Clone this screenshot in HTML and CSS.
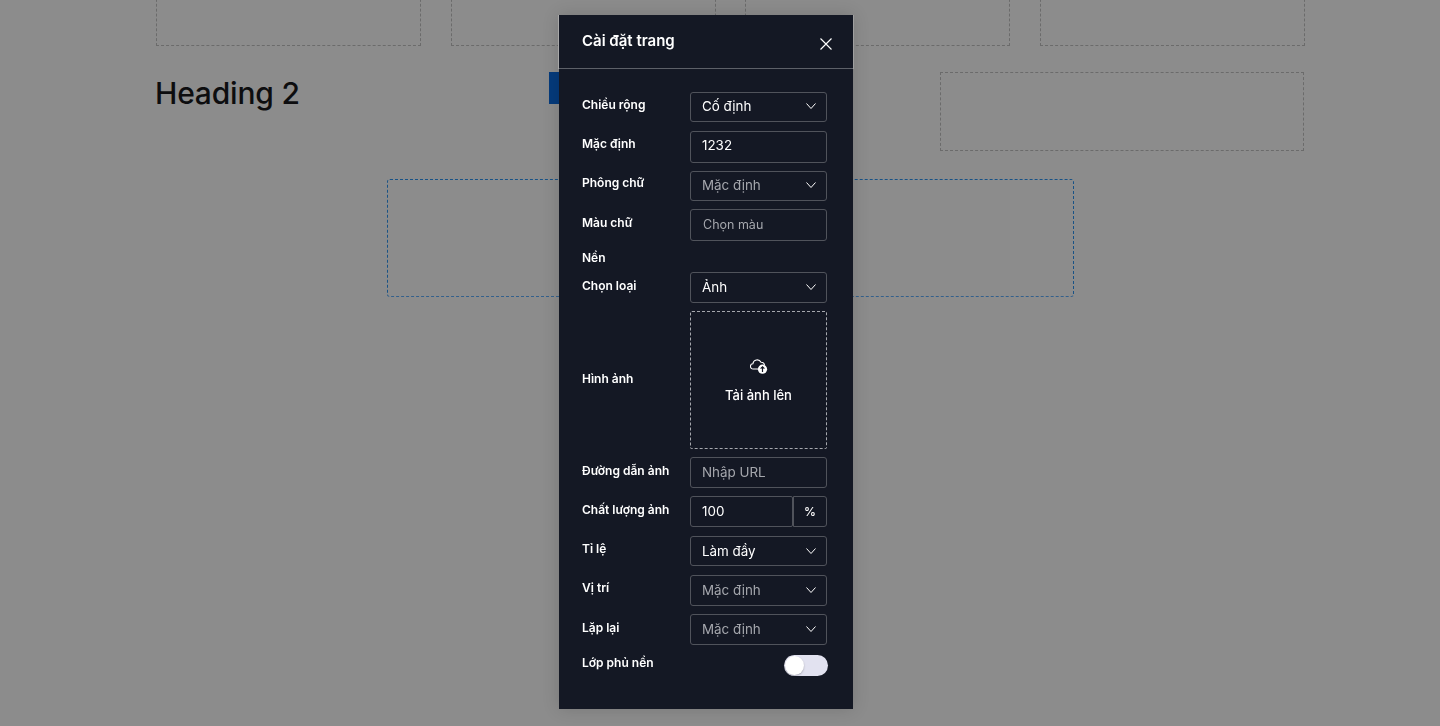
FILE: index.html
```html
<!DOCTYPE html>
<html lang="vi">
<head>
<meta charset="utf-8">
<title>Cài đặt trang</title>
<link rel="stylesheet" href="styles.css">
</head>
<body>
<main class="canvas">
  <div class="ph ph-1"></div>
  <div class="ph ph-2"></div>
  <div class="ph ph-3"></div>
  <div class="ph ph-4"></div>
  <h2 class="heading">Heading 2</h2>
  <div class="blue-btn"></div>
  <div class="ph ph-5"></div>
  <div class="section"></div>
</main>
<div class="overlay"></div>
<section class="modal">
  <header class="modal-head">
    <h3 class="modal-title">Cài đặt trang</h3>
    <svg class="close" width="14" height="14" viewBox="0 0 14 14"><path d="M1.5 1.5l11 11M12.5 1.5l-11 11"/></svg>
  </header>
  <div class="modal-body">
    <div class="row r-30 gap-9"><label class="lbl">Chiều rộng</label><div class="ctl sel up"><span>Cố định</span><svg class="chev" viewBox="0 0 10 6"><path d="M.5.5L5 5.5 9.5.5"/></svg></div></div>
    <div class="row r-32 gap-8"><label class="lbl">Mặc định</label><div class="ctl inp up2"><span>1232</span></div></div>
    <div class="row r-30 gap-8"><label class="lbl lbl-up">Phông chữ</label><div class="ctl sel ph-text up"><span>Mặc định</span><svg class="chev" viewBox="0 0 10 6"><path d="M.5.5L5 5.5 9.5.5"/></svg></div></div>
    <div class="row r-32 gap-8"><label class="lbl lbl-down">Màu chữ</label><div class="ctl inp ph-text small up"><span>Chọn màu</span></div></div>
    <div class="group-title">Nền</div>
    <div class="row r-31 gap-8"><label class="lbl lbl-down">Chọn loại</label><div class="ctl sel up1"><span>Ảnh</span><svg class="chev" viewBox="0 0 10 6"><path d="M.5.5L5 5.5 9.5.5"/></svg></div></div>
    <div class="row r-upload"><label class="lbl">Hình ảnh</label>
      <div class="upload">
        <svg class="cloud" width="18" height="16" viewBox="0 0 18 16"><path class="cl" d="M8.5 10H3.2a2.6 2.6 0 0 1-.3-5.2A4.3 4.3 0 0 1 11 3.2a3.6 3.6 0 0 1 3.6 2.6"/><circle cx="12.5" cy="10.2" r="4.6" fill="#fff"/><path class="ar" d="M12.5 13V8M10.6 9.7l1.9-1.9 1.9 1.9"/></svg>
        <span>Tải ảnh lên</span>
      </div>
    </div>
    <div class="row r-31 gap-8"><label class="lbl lbl-down">Đường dẫn ảnh</label><div class="ctl inp ph-text up"><span>Nhập URL</span></div></div>
    <div class="row r-31 gap-9"><label class="lbl lbl-down">Chất lượng ảnh</label><div class="combo"><div class="ctl inp up1"><span>100</span></div><div class="unit">%</div></div></div>
    <div class="row r-30 gap-9"><label class="lbl">Tỉ lệ</label><div class="ctl sel"><span>Làm đầy</span><svg class="chev" viewBox="0 0 10 6"><path d="M.5.5L5 5.5 9.5.5"/></svg></div></div>
    <div class="row r-31 gap-8"><label class="lbl">Vị trí</label><div class="ctl sel ph-text up1"><span>Mặc định</span><svg class="chev" viewBox="0 0 10 6"><path d="M.5.5L5 5.5 9.5.5"/></svg></div></div>
    <div class="row r-31 gap-10"><label class="lbl lbl-down">Lặp lại</label><div class="ctl sel ph-text up1"><span>Mặc định</span><svg class="chev" viewBox="0 0 10 6"><path d="M.5.5L5 5.5 9.5.5"/></svg></div></div>
    <div class="row r-toggle"><label class="lbl">Lớp phủ nền</label><div class="toggle"><i class="knob"></i></div></div>
  </div>
</section>
</body>
</html>
```
FILE: styles.css
```css
* { box-sizing: border-box; }
html, body { margin: 0; height: 100%; overflow: hidden; }
body { background: #fff; font-family: Inter, "Noto Sans", sans-serif; }

.canvas { position: relative; width: 1440px; height: 726px; }
.ph { position: absolute; border: 1px dashed #c4c4c4; }
.ph-1 { left: 156px; top: -60px; width: 265px; height: 106px; }
.ph-2 { left: 451px; top: -60px; width: 265px; height: 106px; }
.ph-3 { left: 745px; top: -60px; width: 265px; height: 106px; }
.ph-4 { left: 1040px; top: -60px; width: 265px; height: 106px; }
.ph-5 { left: 940px; top: 72px; width: 364px; height: 79px; }
.heading { position: absolute; left: 155px; top: 73px; margin: 0; font-size: 30px; line-height: 40px; font-weight: 500; letter-spacing: -.2px; color: #18191d; }
.blue-btn { position: absolute; left: 549px; top: 72px; width: 40px; height: 32px; background: #0a6be0; }
.section { position: absolute; left: 387px; top: 179px; width: 687px; height: 118px; border: 1px dashed #2d96f5; border-bottom-color: #5fb0ff; border-radius: 3px; }

.overlay { position: fixed; inset: 0; background: rgba(0, 0, 0, .45); }

.modal { position: absolute; left: 559px; top: 15px; width: 294px; height: 694px; background: #141824; box-shadow: 0 0 16px rgba(0, 0, 0, .15); color: #fff; }
.modal-head { height: 54px; display: flex; justify-content: space-between; padding: 16px 20px 0 23px; border-bottom: 1px solid #5d6068; box-shadow: -1px 0 0 #a8a8a8, 1px 0 0 #a0a0a0; }
.modal-title { margin: 0; font-size: 15px; line-height: 20px; font-weight: 600; }
.close { margin-top: 6px; fill: none; stroke: #fff; stroke-width: 1.15; }

.modal-body { padding: 23px 26px 0 23px; }
.row { display: flex; justify-content: space-between; font-size: 12px; }
.r-30 { height: 30px; }
.r-31 { height: 31px; }
.r-32 { height: 32px; }
.gap-8 { margin-bottom: 8px; }
.gap-9 { margin-bottom: 9px; }
.gap-10 { margin-bottom: 10px; }
.lbl { font-size: 12px; line-height: 16px; font-weight: 600; padding-top: 5px; }
.lbl-up { padding-top: 4px; }
.lbl-down { padding-top: 6px; }
.ctl { width: 137px; height: 100%; border: 1px solid #50535b; border-radius: 3px; display: flex; align-items: center; justify-content: space-between; padding: 0 10px 0 11px; font-size: 13.4px; color: #fff; }
.up1 { padding-bottom: 1px; }
.up { padding-bottom: 2px; }
.up2 { padding-bottom: 4px; }
.ph-text { color: #a5a7ad; }
.small { font-size: 12.5px; padding-left: 12px; }
.chev { width: 10px; height: 6px; fill: none; stroke: #fff; stroke-width: 1; }
.group-title { font-size: 12px; line-height: 16px; font-weight: 600; padding-top: 1px; margin-bottom: 6px; }

.r-upload { height: 138px; margin-bottom: 8px; align-items: center; }
.r-upload .lbl { padding: 0 0 2px; }
.upload { width: 137px; height: 100%; border: 1px dashed #a5a7ad; border-radius: 2px; display: flex; flex-direction: column; align-items: center; padding-top: 47px; font-size: 13px; font-weight: 500; }
.cloud { margin-bottom: 12px; margin-left: 1px; }
.cl { fill: none; stroke: #fff; stroke-width: 1.1; }
.ar { fill: none; stroke: #141824; stroke-width: 1.2; }

.combo { display: flex; width: 137px; height: 100%; }
.combo .ctl { width: 103px; flex: none; border-radius: 3px 2px 2px 3px; }
.unit { width: 34px; border: 1px solid #50535b; border-radius: 0 3px 3px 0; font-size: 12px; font-weight: 500; display: flex; align-items: center; justify-content: center; }

.r-toggle { height: 21px; margin-right: -1px; }
.r-toggle .lbl { padding-top: 0; }
.toggle { width: 44px; height: 21px; border-radius: 11px; background: #e2e2f0; padding: 1px; }
.knob { display: block; width: 19px; height: 19px; border-radius: 50%; background: #fff; box-shadow: 0 1px 2px rgba(0, 0, 0, .25); }
```
